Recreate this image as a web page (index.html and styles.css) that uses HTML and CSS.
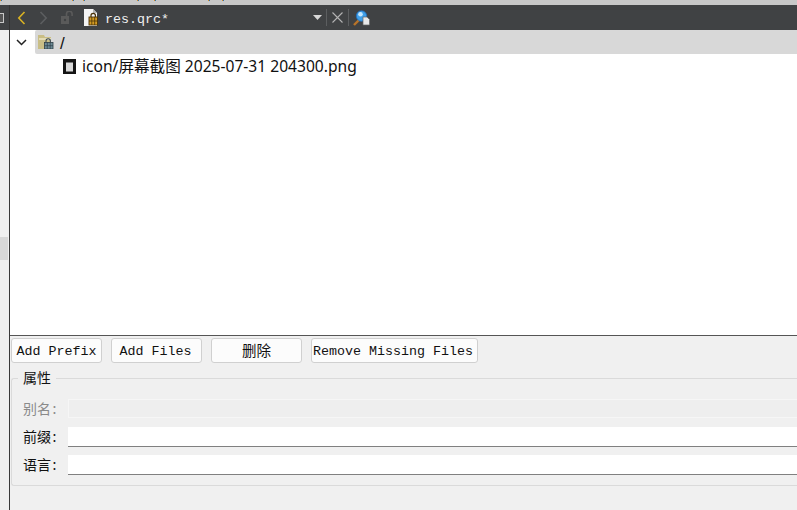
FILE: index.html
```html
<!DOCTYPE html>
<html lang="zh">
<head>
<meta charset="utf-8">
<title>res.qrc</title>
<link rel="stylesheet" href="styles.css">
</head>
<body>
<div class="app">
  <div class="topstrip"><i class="tick t0"></i><i class="tick t5"></i><i class="tick t6"></i><i class="tick t1"></i><i class="tick t2"></i><i class="tick t3"></i><i class="tick t4"></i></div>
  <div class="main">
    <aside class="side">
      <div class="side-head"><div class="side-box"></div></div>
      <div class="side-mark"></div>
    </aside>
    <div class="content">
      <header class="toolbar">
        <svg class="ic back" width="9" height="14" viewBox="0 0 9 14"><path d="M7.500 1 1.800 7l5.700 6" fill="none" stroke="#d9b224" stroke-width="1.600"/></svg>
        <svg class="ic fwd" width="9" height="14" viewBox="0 0 9 14"><path d="M1.500 1 7.200 7l-5.700 6" fill="none" stroke="#5c5e60" stroke-width="1.600"/></svg>
        <svg class="ic lock" width="13" height="13" viewBox="0 0 13 13"><rect x="0" y="5" width="8" height="8" fill="#5a5a5a"/><circle cx="4" cy="9" r="1.200" fill="#404244"/><path d="M5.500 5V3a2.800 2.800 0 0 1 5.600 0v2" fill="none" stroke="#5a5a5a" stroke-width="1.600"/></svg>
        <svg class="ic file" width="15" height="17" viewBox="0 0 15 17"><path d="M0 0h9l4 4v13H0z" fill="#f4f4f4"/><path d="M9 0l4 4H9z" fill="#b5b5b5"/><path d="M7 8V6.500a2.200 2.200 0 0 1 4.400 0V8" fill="none" stroke="#4a3208" stroke-width="1.200"/><rect x="5" y="8" width="8.500" height="8" fill="#d39a22" stroke="#4a3208" stroke-width=".9"/><path d="M7.800 8v8M10.700 8v8M5 12h8.500" stroke="#4a3208" stroke-width=".8"/></svg>
        <span class="fname">res.qrc*</span>
        <svg class="ic arrow" width="9" height="5" viewBox="0 0 9 5"><path d="M0 0h9L4.500 5z" fill="#d8d8d8"/></svg>
        <i class="sep"></i>
        <svg class="ic close" width="11" height="11" viewBox="0 0 11 11"><path d="M.5.500l10 10M10.500.500l-10 10" stroke="#b4b4b4" stroke-width="1.100"/></svg>
        <i class="sep sep-b"></i>
        <svg class="ic find" width="17" height="16" viewBox="0 0 17 16"><path d="M1 15l5-5" stroke="#b8742a" stroke-width="2.400"/><circle cx="8.500" cy="6" r="5.200" fill="#3f9fe8" stroke="#1f6fc0" stroke-width=".8"/><circle cx="7.500" cy="4.300" r="2.300" fill="#c4e7ff"/><path d="M10 7h4l2.500 2.500V15H10z" fill="#e8e8e8" stroke="#666" stroke-width=".7"/></svg>
      </header>
      <section class="tree">
        <div class="row-root">
          <svg class="chev" width="11" height="7" viewBox="0 0 11 7"><path d="M1 1l4.500 4.500L10 1" fill="none" stroke="#222" stroke-width="1.500"/></svg>
          <div class="root-sel">
            <svg class="folder" width="16" height="14" viewBox="0 0 16 14"><path d="M0 0h6l1 2h6v12H0z" fill="#c9be86"/><path d="M1 3h12v2H1z" fill="#e4dcb6"/><path d="M8 7.500V6a2.200 2.200 0 0 1 4.400 0v1.500" fill="none" stroke="#3e4c54" stroke-width="1.100"/><rect x="6.500" y="7.500" width="8.500" height="6.500" fill="#6c8a95" stroke="#2e3f48" stroke-width=".8"/><path d="M9.300 7.500V14M12.200 7.500V14M6.500 10.700H15" stroke="#2e3f48" stroke-width=".7"/></svg>
            <span class="root-name">/</span>
          </div>
        </div>
        <div class="row-file">
          <svg class="png" width="13" height="15" viewBox="0 0 13 15"><rect width="13" height="15" fill="#141414"/><rect x="3" y="3.500" width="7" height="9" fill="#d8d8d8"/></svg>
          <span>icon/屏幕截图 2025-07-31 204300.png</span>
        </div>
      </section>
      <section class="panel">
        <div class="buttons">
          <button class="btn w90">Add Prefix</button>
          <button class="btn w90 nudge">Add Files</button>
          <button class="btn w90 cjk">删除</button>
          <button class="btn w166">Remove Missing Files</button>
        </div>
        <fieldset class="props">
          <legend>属性</legend>
          <div class="field disabled"><label>别名<span class="colon">:</span></label><div class="input"></div></div>
          <div class="field"><label>前缀<span class="colon">:</span></label><div class="input"></div></div>
          <div class="field"><label>语言<span class="colon">:</span></label><div class="input"></div></div>
        </fieldset>
      </section>
    </div>
  </div>
</div>
</body>
</html>
```
FILE: styles.css
```css
* { box-sizing: border-box; }
html, body { margin: 0; height: 100%; overflow: hidden; background: #f0f0f0; }
.app { width: 797px; height: 510px; display: flex; flex-direction: column; font-family: "Noto Sans CJK SC", sans-serif; }
.topstrip { height: 5px; background: #c8c8c8; position: relative; flex: none; }
.tick { position: absolute; top: 0; width: 2px; height: 1px; background: linear-gradient(90deg, #d98a20 50%, #2a70b0 50%); }
.t0 { left: 0; }
.t5 { left: 72px; }
.t6 { left: 83px; }
.t1 { left: 137px; }
.t2 { left: 154px; }
.t3 { left: 208px; }
.t4 { left: 222px; }
.main { flex: 1; display: flex; min-height: 0; }
.side { width: 10px; border-right: 1px solid #3a3a3a; background: #f0f0f0; position: relative; flex: none; }
.side-head { height: 25px; margin-right: -1px; background: #404244; display: flex; align-items: center; border-right: 1px solid #333; }
.side-box { width: 4px; height: 10px; border: 1px solid #c8c8c8; border-left: 0; background: #555; }
.side-mark { position: absolute; left: 0; top: 232px; width: 8px; height: 23px; background: #d8d8d8; }
.content { flex: 1; min-width: 0; display: flex; flex-direction: column; }
.toolbar { height: 25px; background: #404244; display: flex; align-items: center; flex: none; }
.ic { flex: none; display: block; }
.back { margin-left: 7px; }
.fwd { margin-left: 13px; }
.lock { margin-left: 13px; }
.file { margin-left: 10px; }
.fname { margin-left: 6px; padding-top: 4px; width: 208px; color: #f0f0f0; font: 13.330px/16px "Liberation Mono", monospace; flex: none; }
.arrow { margin-top: -1px; }
.sep { width: 1px; height: 17px; background: #5c5e60; margin-left: 4px; flex: none; }
.close { margin-left: 5px; }
.sep-b { margin-left: 5px; }
.find { margin-left: 4px; }
.tree { flex: 1; min-height: 0; background: #fff; color: #111; }
.row-root { height: 24px; display: flex; align-items: center; }
.chev { margin-left: 6px; flex: none; }
.root-sel { margin-left: 8px; flex: 1; height: 24px; background: #d8d8d8; border-radius: 2px 0 0 2px; display: flex; align-items: center; padding-left: 3px; }
.root-name { margin-left: 6px; padding-top: 3px; font-family: "Liberation Sans", sans-serif; font-size: 17px; line-height: 20px; }
.row-file { height: 24px; display: flex; align-items: center; padding-left: 53px; white-space: nowrap; font-family: "Noto Sans", "Noto Sans CJK SC", sans-serif; font-size: 15.600px; line-height: 20px; }
.png { margin-right: 6px; flex: none; }
.panel { height: 175px; flex: none; border-top: 1px solid #555; background: #f0f0f0; padding: 2px 0 0 1px; }
.buttons { display: flex; gap: 9px; }
.btn { height: 25px; padding: 2px 0 0; background: #fcfcfc; border: 1px solid #d0d0d0; border-radius: 3px; color: #111; font: 13.330px/16px "Liberation Mono", "Noto Sans CJK SC", monospace; white-space: nowrap; }
.w90 { width: 91px; }
.w166 { width: 167px; padding-right: 3px; }
.nudge { padding-right: 2px; }
.cjk { font-size: 14.500px; }
.props { margin: 7px 0 0; padding: 13px 0 0 11px; height: 116px; min-width: 0; border: 1px solid #dadada; border-right: 0; border-radius: 3px 0 0 3px; }
.props legend { padding: 0 5px 2px; margin-left: -5px; font-size: 14px; line-height: 14px; color: #111; }
.field { display: flex; align-items: flex-start; height: 20px; margin-bottom: 8px; font-size: 14px; line-height: 18px; color: #111; }
.field label { width: 45px; flex: none; }
.colon { display: inline-block; width: 7px; text-align: center; }
.input { flex: 1; height: 20px; background: #fff; border-bottom: 1px solid #808080; }
.disabled { color: #8a8a8a; }
.disabled .input { height: 19px; background: #eeeeee; border: 1px solid #f6f6f6; border-right: 0; }
```
